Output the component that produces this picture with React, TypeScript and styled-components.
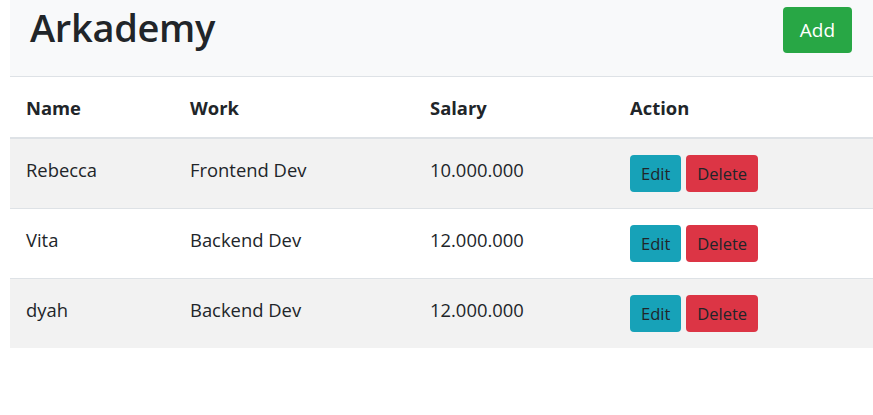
import React from "react";
import styled, { createGlobalStyle } from "styled-components";

const Global = createGlobalStyle`
  body { margin: 0; font-family: "Open Sans", "Noto Sans", sans-serif; color: #212529; background: #fff; }
`;

const Page = styled.div`
  padding: 0 0 0 10px;
  width: 873px;
  box-sizing: border-box;
`;

const Nav = styled.nav`
  display: flex;
  align-items: flex-start;
  justify-content: space-between;
  height: 76px;
  background: #f8f9fa;
  padding: 0 21px 0 20px;
  box-sizing: border-box;
`;

const Title = styled.h1`
  margin: 0;
  margin-top: 4px;
  font-size: 38px;
  font-weight: 600;
  line-height: 46px;
  color: #212529;
  letter-spacing: -0.3px;
`;

const AddButton = styled.button`
  margin-top: 7px;
  width: 69px;
  height: 46px;
  background: #28a745;
  color: #fff;
  border: none;
  border-radius: 4px;
  font-family: inherit;
  font-size: 19px;
`;

const Table = styled.div`
  border-top: 1px solid #dee2e6;
`;

const Row = styled.div<{ $head?: boolean; $striped?: boolean }>`
  display: grid;
  grid-template-columns: 164px 240px 200px 1fr;
  align-items: center;
  height: ${(p) => (p.$head ? 60 : 69)}px;
  background: ${(p) => (p.$striped ? "#f2f2f2" : "transparent")};
  border-bottom: ${(p) => (p.$head ? "2px solid #dee2e6" : "1px solid #dee2e6")};
  &:last-child { border-bottom: none; }
  box-sizing: content-box;
`;

const Cell = styled.div<{ $head?: boolean }>`
  padding-left: 16px;
  font-size: 18.4px;
  font-weight: ${(p) => (p.$head ? 700 : 400)};
  color: #212529;
  margin-top: ${(p) => (p.$head ? 0 : -8)}px;
`;

const Actions = styled.div`
  display: flex;
  gap: 5px;
  margin-top: 8px;
`;

const ActBtn = styled.button<{ $kind: "edit" | "delete" }>`
  height: 37px;
  padding: 0 11px;
  border: none;
  border-radius: 4px;
  font-family: inherit;
  font-size: 16.5px;
  color: #212529;
  background: ${(p) => (p.$kind === "edit" ? "#17a2b8" : "#dc3545")};
`;

const data = [
  { name: "Rebecca", work: "Frontend Dev", salary: "10.000.000" },
  { name: "Vita", work: "Backend Dev", salary: "12.000.000" },
  { name: "dyah", work: "Backend Dev", salary: "12.000.000" },
];

export default function App() {
  return (
    <Page>
      <Global />
      <Nav>
        <Title>Arkademy</Title>
        <AddButton>Add</AddButton>
      </Nav>
      <Table>
        <Row $head>
          <Cell $head>Name</Cell>
          <Cell $head>Work</Cell>
          <Cell $head>Salary</Cell>
          <Cell $head>Action</Cell>
        </Row>
        {data.map((d, i) => (
          <Row key={i} $striped={i % 2 === 0}>
            <Cell>{d.name}</Cell>
            <Cell>{d.work}</Cell>
            <Cell>{d.salary}</Cell>
            <Cell>
              <Actions>
                <ActBtn $kind="edit">Edit</ActBtn>
                <ActBtn $kind="delete">Delete</ActBtn>
              </Actions>
            </Cell>
          </Row>
        ))}
      </Table>
    </Page>
  );
}
